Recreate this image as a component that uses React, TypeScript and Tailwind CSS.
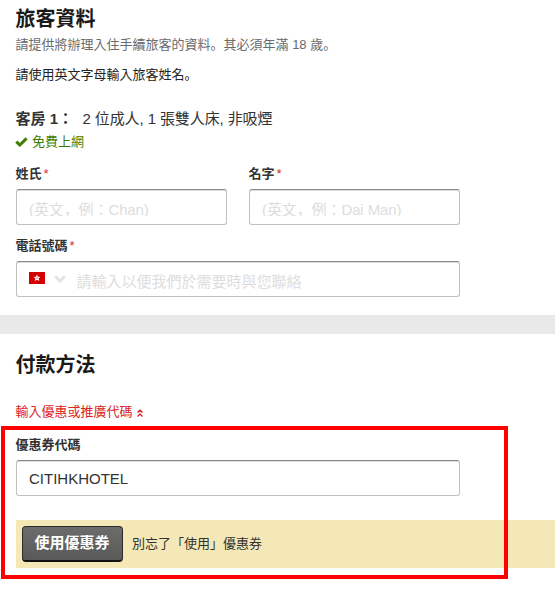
import React from 'react';

interface FieldProps {
  id: string;
  label: string;
  required?: boolean;
  className?: string;
  children: React.ReactNode;
}

const INPUT_BOX =
  'block w-full h-9 rounded-[3px] border border-[#c0c0c0] border-t-[#888] bg-white shadow-[inset_0_1px_0_#ddd] outline-none';

const Field: React.FC<FieldProps> = ({ id, label, required, className = '', children }) => (
  <div className={className}>
    <label htmlFor={id} className="-ml-[0.5px] flex h-8 items-center pt-[2px] text-[13px] font-bold text-[#333]">
      {label}
      {required && <span className="ml-[2px] font-normal text-[#d32f2f]">*</span>}
    </label>
    {children}
  </div>
);

// The line is shorter than the input, so descenders of the hint are cut off
const NameInput = ({ id, placeholder }: { id: string; placeholder: string }) => (
  <div className={`${INPUT_BOX} px-3`}>
    <div className="h-[26px] overflow-hidden">
      <input
        id={id}
        placeholder={placeholder}
        className="block h-[38px] w-full bg-transparent font-['Liberation_Sans','Noto_Sans_CJK_JP',sans-serif] text-[15px] tracking-[-0.1px] outline-none placeholder:text-[#ddd]"
      />
    </div>
  </div>
);

const CheckIcon = () => (
  <svg width="13" height="10" viewBox="0 0 13 10" fill="none" className="mr-[4px]">
    <path d="M1.3 4.6L4.8 8L11.6 1.4" stroke="#3f7d00" strokeWidth="3" />
  </svg>
);

const FlagIcon = () => (
  <svg width="16" height="12" viewBox="0 0 16 12" className="mb-[2px] shrink-0">
    <rect width="16" height="12" fill="#d30000" />
    <path
      d="M8 2.5L9 4.8L11.4 4.9L9.6 6.6L10.3 9L8 7.7L5.7 9L6.4 6.6L4.6 4.9L7 4.8Z"
      fill="#fff"
    />
    <circle cx="8" cy="6.1" r="0.8" fill="#e66" />
  </svg>
);

const ChevronIcon = () => (
  <svg width="12" height="8" viewBox="0 0 12 8" fill="none" className="mb-px ml-[9px] shrink-0">
    <path d="M1.2 1.3L6 6L10.8 1.3" stroke="#e2e2e2" strokeWidth="3" />
  </svg>
);

const DoubleUpIcon = () => (
  <svg width="6" height="8" viewBox="0 0 6 8" fill="none" className="ml-[4px] mt-[2px]">
    <path d="M0.5 3.6L3 1.2L5.5 3.6M0.5 7.4L3 5L5.5 7.4" stroke="#dd2222" strokeWidth="1.4" />
  </svg>
);

// Full stop sitting at the lower left of its cell
const Stop = () => <span className="font-['Noto_Sans_CJK_JP',sans-serif]">。</span>;

export default function App() {
  return (
    <div className="relative h-[589px] w-[555px] overflow-hidden bg-white font-['Liberation_Sans','Noto_Sans_CJK_TC',sans-serif] text-[#333]">
      <section className="h-[315px] pl-4">
        <h2 className="-ml-[0.5px] h-9 pt-px text-[20px] font-bold leading-9 text-[#1a1a1a]">旅客資料</h2>
        <p className="-ml-[0.5px] h-4 text-[13px] leading-4 text-[#6b6b6b]">
          請提供將辦理入住手續旅客的資料<Stop />其必須年滿 18 歲<Stop />
        </p>
        <p className="-ml-[0.5px] mt-3.5 h-4 text-[13px] leading-4 text-[#222]">
          請使用英文字母輸入旅客姓名<Stop />
        </p>

        <div className="-ml-[0.5px] mt-[26px] flex h-[22px] items-center text-[15px]">
          <span className="w-[67px] font-bold">客房 1：</span>
          <span className="tracking-[-0.1px]">2 位成人, 1 張雙人床, 非吸煙</span>
        </div>
        <div className="-ml-px flex h-[27px] items-center pb-1 text-[13px] text-[#3f7d00]">
          <CheckIcon />
          免費上網
        </div>

        <div className="flex gap-[22px]">
          <Field id="last-name" label="姓氏" required className="w-[211px]">
            <NameInput id="last-name" placeholder="(英文，例：Chan)" />
          </Field>
          <Field id="first-name" label="名字" required className="w-[211px]">
            <NameInput id="first-name" placeholder="(英文，例：Dai Man)" />
          </Field>
        </div>

        <Field id="phone" label="電話號碼" required className="mt-1 w-[444px]">
          <div className={`${INPUT_BOX} flex! items-center pl-3`}>
            <FlagIcon />
            <ChevronIcon />
            <input
              id="phone"
              placeholder="請輸入以便我們於需要時與您聯絡"
              className="ml-[10.5px] h-full w-full bg-transparent pt-[12px] pb-[8px] text-[15px] outline-none placeholder:text-[#ddd]"
            />
          </div>
        </Field>
      </section>

      <div className="h-[19px] bg-[#e9e9e9]" />

      <section className="pl-4">
        <h2 className="-ml-[0.5px] h-[60px] pt-px text-[20px] font-bold leading-[60px] text-[#1a1a1a]">付款方法</h2>
        <button className="-ml-[0.5px] mt-2 flex h-[20px] items-center text-[13px] text-[#dd2222]">
          輸入優惠或推廣代碼
          <DoubleUpIcon />
        </button>

        <Field id="coupon" label="優惠券代碼" className="mt-[6px] w-[444px]">
          <input
            id="coupon"
            defaultValue="CITIHKHOTEL"
            className={`${INPUT_BOX} px-3 text-[15px] text-[#333]`}
          />
        </Field>

        <div className="mt-6 flex h-12 items-center bg-[#f5e8b7] pl-[6px]">
          <button className="h-9 w-[101px] rounded-[4px] border border-b-2 border-[#2b2b2b] border-b-[#111] bg-linear-to-b from-[#6c6c6c] to-[#595959] pr-px text-[15px] font-bold text-white">
            使用優惠券
          </button>
          <span className="ml-[9px] text-[13px] text-[#333]">別忘了「使用」優惠券</span>
        </div>
      </section>

      {/* Highlight around the coupon form */}
      <div className="pointer-events-none absolute left-px top-[426px] h-[153px] w-[507px] border-4 border-[#ff0000]" />
    </div>
  );
}
